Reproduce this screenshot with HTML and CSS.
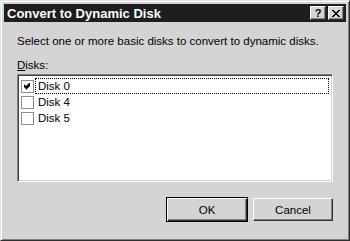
FILE: index.html
```html
<!DOCTYPE html>
<html>
<head>
  <meta charset="utf-8">
  <title>Convert to Dynamic Disk</title>
  <link rel="stylesheet" href="styles.css">
</head>
<body>
  <div class="window">
    <div class="titlebar">
      <span class="title">Convert to Dynamic Disk</span>
      <div class="caption-buttons">
        <div class="cap-btn help">?</div>
        <div class="cap-btn close">
          <svg width="8" height="7" viewBox="0 0 8 7">
            <path d="M0 0h2v1h1v1h2v-1h1v-1h2v1h-1v1h-1v1h-1v1h1v1h1v1h1v1h-2v-1h-1v-1h-2v1h-1v1h-2v-1h1v-1h1v-1h1v-1h-1v-1h-1v-1h-1z" fill="#000"/>
          </svg>
        </div>
      </div>
    </div>

    <div class="content">
      <p class="intro">Select one or more basic disks to convert to dynamic disks.</p>
      <p class="label"><u>D</u>isks:</p>

      <div class="listbox">
        <div class="item">
          <span class="check">
            <svg width="7" height="7" viewBox="0 0 7 7">
              <path d="M6 0v3l-1 1-1 1-1 1-1 1v-1l-2-2v-3l2 2 1-1 1-1 1-1z" fill="#000"/>
            </svg>
          </span>
          <span class="text focused">Disk 0</span>
        </div>
        <div class="item">
          <span class="check"></span>
          <span class="text">Disk 4</span>
        </div>
        <div class="item">
          <span class="check"></span>
          <span class="text">Disk 5</span>
        </div>
      </div>

      <div class="buttons">
        <div class="btn default">OK</div>
        <div class="btn">Cancel</div>
      </div>
    </div>
  </div>
</body>
</html>
```

FILE: styles.css
```css
body {
  margin: 0;
  background: #ffffff;
  font-family: "Liberation Sans", Arial, sans-serif;
  font-size: 11.5px;
  color: #000;
}

/* dialog frame */
.window {
  width: 350px;
  height: 241px;
  box-sizing: border-box;
  background: #d4d4d4;
  border: 1px solid;
  border-color: #e4e4e4 #303030 #303030 #e4e4e4;
  box-shadow: inset 1px 1px #ffffff, inset -1px -1px #808080;
  padding: 3px;
  display: flex;
  flex-direction: column;
}

.titlebar {
  height: 18px;
  background: #1e1e1e;
  display: flex;
  align-items: center;
  justify-content: space-between;
  padding: 0 2px 0 3px;
}

.title {
  color: #fff;
  font-weight: bold;
  font-size: 13px;
}

.caption-buttons {
  display: flex;
  gap: 2px;
}

.cap-btn {
  width: 16px;
  height: 14px;
  box-sizing: border-box;
  background: #d4d4d4;
  border: 1px solid;
  border-color: #ffffff #303030 #303030 #ffffff;
  box-shadow: inset -1px -1px #808080;
  display: flex;
  align-items: center;
  justify-content: center;
}

.help {
  font-weight: bold;
  font-size: 11px;
  line-height: 12px;
}

.content {
  flex: 1;
  padding: 12px 13px 0 13px;
}

.intro {
  margin: 0;
  line-height: 14px;
}

.label {
  margin: 10px 0 0 0;
  line-height: 14px;
}

/* list with check boxes */
.listbox {
  margin-top: 2px;
  height: 108px;
  box-sizing: border-box;
  background: #fff;
  border: 1px solid;
  border-color: #808080 #ffffff #ffffff #808080;
  box-shadow: inset 1px 1px #404040, inset -1px -1px #d4d4d4;
  padding: 3px 2px 0 3px;
}

.item {
  display: flex;
  align-items: center;
  height: 16px;
}

.check {
  width: 13px;
  height: 13px;
  box-sizing: border-box;
  border: 1px solid #8c8c8c;
  background: #fff;
  display: flex;
  align-items: center;
  justify-content: center;
}

.text {
  flex: 1;
  height: 16px;
  box-sizing: border-box;
  line-height: 14px;
  padding-left: 2px;
  border: 1px solid transparent;
  margin-left: 1px;
  margin-right: 1px;
}

.text.focused {
  border: 1px dotted #000;
}

/* OK / Cancel */
.buttons {
  display: flex;
  justify-content: flex-end;
  align-items: center;
  gap: 5px;
  margin-top: 15px;
}

.btn {
  width: 80px;
  height: 23px;
  box-sizing: border-box;
  background: #d4d4d4;
  border: 1px solid;
  border-color: #ffffff #303030 #303030 #ffffff;
  box-shadow: inset -1px -1px #808080;
  display: flex;
  align-items: center;
  justify-content: center;
}

.btn.default {
  width: 82px;
  height: 25px;
  border: 1px solid #000;
  box-shadow: inset 1px 1px #ffffff, inset -1px -1px #303030, inset -2px -2px #808080;
}
```
